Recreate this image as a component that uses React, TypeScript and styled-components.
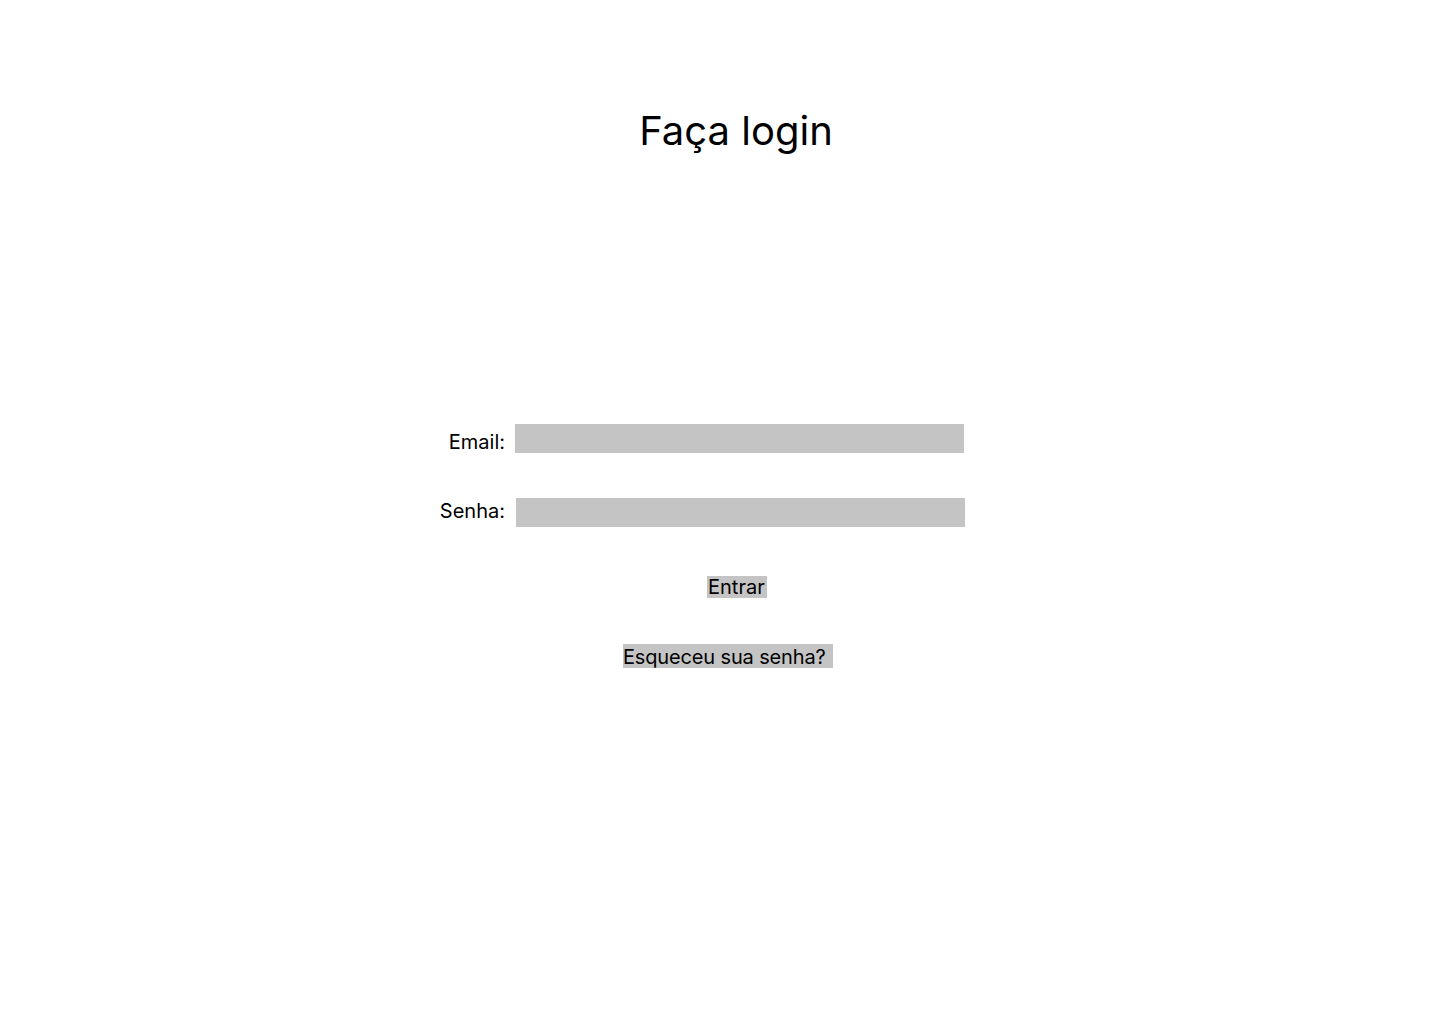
import React from "react";
import styled, { createGlobalStyle } from "styled-components";

const Global = createGlobalStyle`
  html, body { margin: 0; padding: 0; background: #ffffff; }
  body { font-family: Inter, "Noto Sans", sans-serif; color: #000; }
`;

const Page = styled.main`
  width: 1440px;
  min-height: 1024px;
  display: flex;
  flex-direction: column;
`;

const Title = styled.h1`
  margin: 0;
  padding: 107px 0 0 32px;
  text-align: center;
  font-size: 40px;
  font-weight: 400;
  line-height: 48px;
`;

const Form = styled.form`
  margin-top: 269px;
  display: flex;
  flex-direction: column;
`;

const Row = styled.div<{ $shift?: number }>`
  display: grid;
  grid-template-columns: 505px 449px;
  column-gap: ${(p) => 10 + (p.$shift ?? 0)}px;
  align-items: center;
  height: 29px;
  margin-bottom: 45px;
`;

const Label = styled.label<{ $lift?: number }>`
  text-align: right;
  font-size: 20px;
  line-height: 24px;
  position: relative;
  top: ${(p) => p.$lift ?? 0}px;
`;

const Input = styled.input`
  border: none;
  outline: none;
  background: #c4c4c4;
  height: 29px;
  padding: 0;
  margin: 0;
  width: 449px;
`;

const Actions = styled.div`
  display: flex;
  flex-direction: column;
  align-items: flex-start;
`;

const Button = styled.button<{ $left: number; $top: number; $w: number; $h: number; $tight?: boolean }>`
  margin-left: ${(p) => p.$left}px;
  margin-top: ${(p) => p.$top}px;
  width: ${(p) => p.$w}px;
  height: ${(p) => p.$h}px;
  border: none;
  background: #c4c4c4;
  padding: ${(p) => (p.$tight ? "1px 0 0 0" : "0 0 0 1px")};
  font-family: Inter, "Noto Sans", sans-serif;
  font-size: 20px;
  line-height: 22px;
  letter-spacing: ${(p) => (p.$tight ? "-0.15px" : "0")};
  color: #000;
  text-align: left;
  white-space: nowrap;
`;

export default function App() {
  return (
    <>
      <Global />
      <Page>
        <Title>Faça login</Title>
        <Form onSubmit={(e) => e.preventDefault()}>
          <Row>
            <Label $lift={3}>Email:</Label>
            <Input type="email" />
          </Row>
          <Row $shift={1}>
            <Label $lift={-2}>Senha:</Label>
            <Input type="password" />
          </Row>
          <Actions>
            <Button $left={707} $top={4} $w={60} $h={22}>Entrar</Button>
            <Button $left={623} $top={46} $w={210} $h={24} $tight>Esqueceu sua senha?</Button>
          </Actions>
        </Form>
      </Page>
    </>
  );
}
